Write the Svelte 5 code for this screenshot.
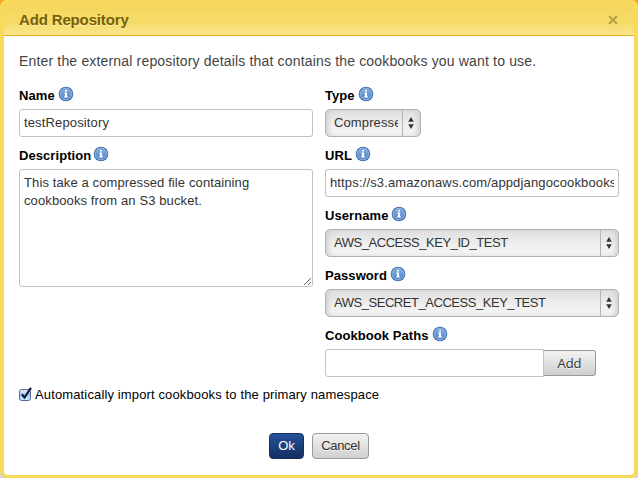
<script>
  let name = $state('testRepository');
  let description = $state('This take a compressed file containing\ncookbooks from an S3 bucket.');
  let url = $state('https://s3.amazonaws.com/appdjangocookbooks');
  let path = $state('');
  let autoImport = $state(true);
</script>

{#snippet label(text, w)}
  <div class="label">
    <span style:width="{w}px">{text}</span>
    <svg width="16" height="16" viewBox="0 0 16 16">
      <defs>
        <linearGradient id="info" x1="0" y1="0" x2="0" y2="1">
          <stop offset="0" stop-color="#82ace0" /><stop offset="1" stop-color="#5589c8" />
        </linearGradient>
      </defs>
      <circle cx="8" cy="8" r="7.3" fill="#3f6ca8" />
      <circle cx="8" cy="8" r="5.9" fill="url(#info)" stroke="#94b9e2" stroke-width=".9" />
      <path d="M7 4h2v1.6H7zM6.4 6.6H9v3.7h.8v1.1H6.2v-1.1H7V7.7h-.6z" fill="#fff" />
    </svg>
  </div>
{/snippet}

{#snippet select(text, w)}
  <button class="select" class:small={w}>
    <span class="value">{text}</span>
    <span class="arrows">
      <svg width="6" height="12" viewBox="0 0 6 12"><path d="M3 0l2.8 4.8H.2zM3 12L.2 7.2h5.6z" fill="#333" /></svg>
    </span>
  </button>
{/snippet}

<div class="backdrop">
  <div class="dialog">
    <header>
      <h1>Add Repository</h1>
      <svg class="close" width="10" height="10" viewBox="0 0 10 10">
        <path d="M1 2l8 8M9 2L1 10" stroke="#fff" stroke-opacity=".35" stroke-width="2" />
        <path d="M1 1l8 8M9 1L1 9" stroke="#b9a239" stroke-width="2.3" />
      </svg>
    </header>
    <main>
      <p>Enter the external repository details that contains the cookbooks you want to use.</p>
      <div class="columns">
        <section>
          {@render label('Name', 36)}
          <input class="field" bind:value={name} />
          {@render label('Description', 71)}
          <textarea class="field" bind:value={description}></textarea>
        </section>
        <section>
          {@render label('Type', 30)}
          {@render select('Compressed', true)}
          {@render label('URL', 27)}
          <input class="field" bind:value={url} />
          {@render label('Username', 63)}
          {@render select('AWS_ACCESS_KEY_ID_TEST')}
          {@render label('Password', 62)}
          {@render select('AWS_SECRET_ACCESS_KEY_TEST')}
          {@render label('Cookbook Paths', 104)}
          <div class="paths">
            <input class="field" bind:value={path} />
            <button class="btn add">Add</button>
          </div>
        </section>
      </div>
      <label class="check">
        <input type="checkbox" bind:checked={autoImport} />
        <svg width="13" height="15" viewBox="0 0 13 15">
          <defs>
            <linearGradient id="chk" x1="0" y1="0" x2="0" y2="1">
              <stop offset="0" stop-color="#e3effc" /><stop offset=".5" stop-color="#a6c9f3" /><stop offset="1" stop-color="#c9efff" />
            </linearGradient>
          </defs>
          <rect x=".5" y="2.5" width="11" height="11" rx="2" fill="url(#chk)" stroke="#51659f" />
          {#if autoImport}<path d="M2.8 7.3l2.7 3.2L12 .8" fill="none" stroke="#111a30" stroke-width="2.2" />{/if}
        </svg>
        <span>Automatically import cookbooks to the primary namespace</span>
      </label>
      <footer>
        <button class="btn ok">Ok</button>
        <button class="btn cancel">Cancel</button>
      </footer>
    </main>
  </div>
</div>

<style>
  :global(body) { margin: 0; overflow: hidden; }
  * { box-sizing: border-box; }
  .backdrop {
    width: 638px; height: 478px;
    background: linear-gradient(#f5a623 0 30px, #d8d8d8 60px);
    font: 13px "Liberation Sans", Arial, sans-serif;
    color: #333;
  }
  .dialog {
    height: 478px; padding: 0 4px 3px;
    border-radius: 7px; background: #f7d95c;
    display: flex; flex-direction: column;
  }
  header {
    height: 35px; flex: none; margin: 0 -4px; padding: 4px 19px 0;
    display: flex; align-items: center; justify-content: space-between;
    background: linear-gradient(90deg, #f7d95c 4px, transparent 4px 634px, #f7d95c 634px), linear-gradient(#f7d95c 0, #f5d75d 8px, #f7db66 18px, #f5d860 19px, #fae58c 35px);
    border-radius: 7px 7px 0 0;
  }
  h1 {
    margin: 0; font-size: 15px; line-height: 18px; letter-spacing: -.15px;
    color: #756000; text-shadow: 0 1px 0 rgba(255,255,255,.5);
  }
  .close { margin-right: 1px; }
  main {
    flex: 1; background: linear-gradient(#dcb21d 1px, #fff 1px);
    border-radius: 0 0 4px 4px; padding: 16px 15px 0;
  }
  p { margin: 0; font-size: 14px; line-height: 20px; letter-spacing: .168px; color: #444; white-space: nowrap; }
  .columns { display: grid; grid-template-columns: 294px 294px; gap: 12px; margin-top: 14px; }
  section { display: flex; flex-direction: column; align-items: flex-start; }
  .label {
    height: 24px; display: flex; gap: 3px; font-weight: bold; color: #000;
    line-height: 22px; letter-spacing: .07px; white-space: nowrap;
  }
  .label svg { margin-top: 1px; }
  .label:not(:first-child) { height: 32px; padding-top: 8px; }
  .field {
    width: 294px; height: 28px; margin: 0; padding: 3px 4px 5px; border: 1px solid #c2c2c2;
    border-radius: 3px; background: #fff; color: #333; font: inherit; line-height: 18px;
    letter-spacing: .14px; outline: 0;
  }
  textarea.field { height: 118px; padding-top: 4px; letter-spacing: .11px; resize: both; overflow: hidden; }
  .select {
    width: 294px; height: 28px; padding: 0; border: 1px solid #b0b0b0; border-radius: 5px;
    display: flex; color: #333; font: inherit; line-height: 26px; text-align: left; letter-spacing: -.46px;
    background: linear-gradient(#dedede, #f0f0f0 60%, #f3f3f3);
    box-shadow: inset 4px 0 5px -2px #cecece, inset -4px 0 5px -2px #cecece;
  }
  .small { width: 96px; letter-spacing: .12px; }
  .value { flex: 1; margin: 0 4px 0 8px; overflow: hidden; white-space: nowrap; }
  .arrows { width: 18px; flex: none; display: flex; align-items: center; padding-left: 5px; align-self: stretch; border-left: 1px solid #b5b5b5; }
  .paths { display: flex; align-items: center; }
  .paths .field { width: 219px; border-radius: 3px 0 0 3px; }
  .btn {
    height: 26px; padding: 0; border: 1px solid #999; border-radius: 4px;
    font: 13px/24px "Liberation Sans", Arial, sans-serif; color: #333;
    background: linear-gradient(#f3f3f3, #cfcfcf); text-shadow: 0 1px 0 rgba(255,255,255,.6);
  }
  .add { width: 52px; border-radius: 0 3px 3px 0; border-left: 0; font-family: "Open Sans", sans-serif; }
  .check { display: flex; height: 18px; margin-top: 9px; line-height: 18px; letter-spacing: .135px; color: #000; white-space: nowrap; }
  .check svg { margin: 1px 3px 0 0; }
  .check input { position: absolute; opacity: 0; }
  footer { display: flex; justify-content: center; gap: 8px; margin-top: 29px; }
  .ok { width: 35px; color: #fff; border-color: #182e5c; background: linear-gradient(#24529a, #152e60); text-shadow: none; }
  .cancel { width: 57px; letter-spacing: -.3px; }
</style>
